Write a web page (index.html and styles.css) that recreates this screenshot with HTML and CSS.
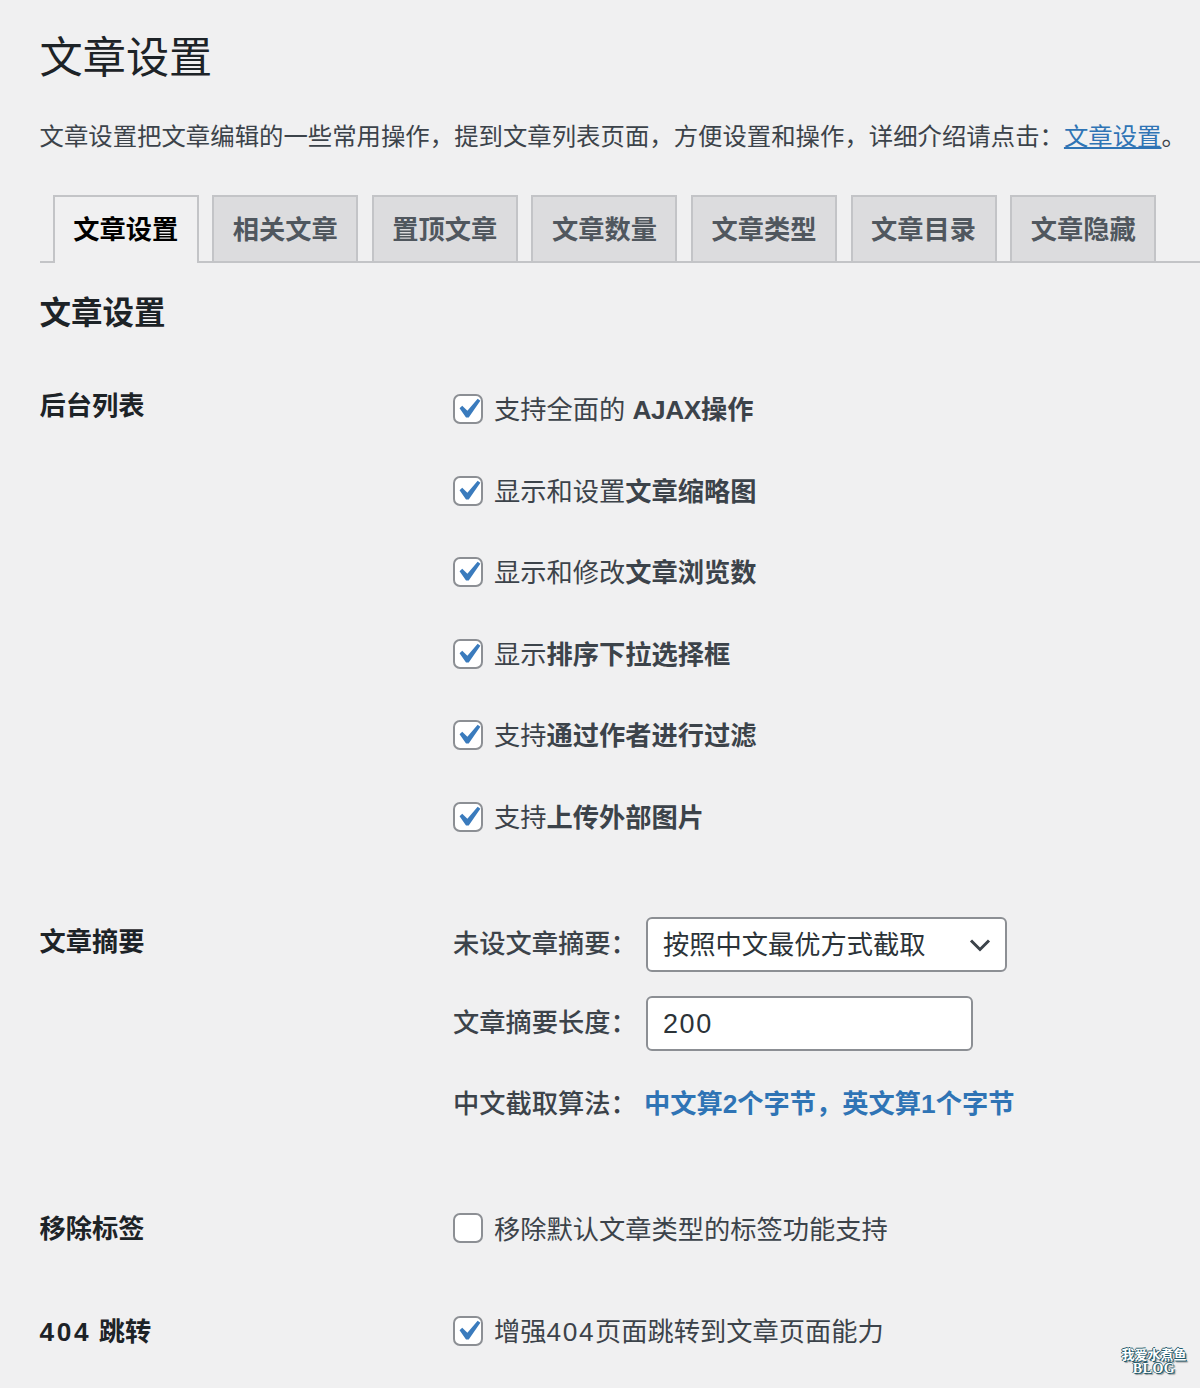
FILE: index.html
```html
<!DOCTYPE html>
<html lang="zh-CN">
<head>
  <meta charset="UTF-8">
  <title>文章设置</title>
  <link rel="stylesheet" href="styles.css">
</head>
<body>
  <div class="wrap">
    <h1>文章设置</h1>
    <p class="intro">文章设置把文章编辑的一些常用操作，提到文章列表页面，方便设置和操作，详细介绍请点击：<a href="#">文章设置</a>。</p>

    <nav class="tabs">
      <a class="tab active" href="#">文章设置</a>
      <a class="tab" href="#">相关文章</a>
      <a class="tab" href="#">置顶文章</a>
      <a class="tab" href="#">文章数量</a>
      <a class="tab" href="#">文章类型</a>
      <a class="tab" href="#">文章目录</a>
      <a class="tab" href="#">文章隐藏</a>
    </nav>

    <h2>文章设置</h2>

    <div class="form-row list-row">
      <div class="row-title">后台列表</div>
      <div class="check-list">
        <label class="check"><span class="box"><svg viewBox="0 0 20 20"><path d="M14.83 4.89l1.34.94-5.81 8.38H9.02L5.78 9.67l1.34-1.25 2.57 2.4z"/></svg></span><span class="check-text">支持全面的 <b><span class="latin">AJAX</span>操作</b></span></label>
        <label class="check"><span class="box"><svg viewBox="0 0 20 20"><path d="M14.83 4.89l1.34.94-5.81 8.38H9.02L5.78 9.67l1.34-1.25 2.57 2.4z"/></svg></span><span class="check-text">显示和设置<b>文章缩略图</b></span></label>
        <label class="check"><span class="box"><svg viewBox="0 0 20 20"><path d="M14.83 4.89l1.34.94-5.81 8.38H9.02L5.78 9.67l1.34-1.25 2.57 2.4z"/></svg></span><span class="check-text">显示和修改<b>文章浏览数</b></span></label>
        <label class="check"><span class="box"><svg viewBox="0 0 20 20"><path d="M14.83 4.89l1.34.94-5.81 8.38H9.02L5.78 9.67l1.34-1.25 2.57 2.4z"/></svg></span><span class="check-text">显示<b>排序下拉选择框</b></span></label>
        <label class="check"><span class="box"><svg viewBox="0 0 20 20"><path d="M14.83 4.89l1.34.94-5.81 8.38H9.02L5.78 9.67l1.34-1.25 2.57 2.4z"/></svg></span><span class="check-text">支持<b>通过作者进行过滤</b></span></label>
        <label class="check"><span class="box"><svg viewBox="0 0 20 20"><path d="M14.83 4.89l1.34.94-5.81 8.38H9.02L5.78 9.67l1.34-1.25 2.57 2.4z"/></svg></span><span class="check-text">支持<b>上传外部图片</b></span></label>
      </div>
    </div>

    <div class="form-row excerpt-row">
      <div class="row-title">文章摘要</div>
      <div class="fields">
        <div class="field">
          <span class="field-label">未设文章摘要：</span>
          <div class="select">按照中文最优方式截取<svg viewBox="0 0 20 20"><path d="M4 7l6 6 6-6"/></svg></div>
        </div>
        <div class="field">
          <span class="field-label">文章摘要长度：</span>
          <div class="input"><span class="num">200</span></div>
        </div>
        <div class="field algo">
          <span class="field-label">中文截取算法：</span>
          <span class="algo-value">中文算2个字节，英文算1个字节</span>
        </div>
      </div>
    </div>

    <div class="form-row tag-row">
      <div class="row-title">移除标签</div>
      <label class="check"><span class="box"></span><span class="check-text">移除默认文章类型的标签功能支持</span></label>
    </div>

    <div class="form-row redirect-row">
      <div class="row-title"><span class="num">404</span> 跳转</div>
      <label class="check"><span class="box"><svg viewBox="0 0 20 20"><path d="M14.83 4.89l1.34.94-5.81 8.38H9.02L5.78 9.67l1.34-1.25 2.57 2.4z"/></svg></span><span class="check-text">增强<span class="num">404</span>页面跳转到文章页面能力</span></label>
    </div>
  </div>

  <div class="watermark">我爱水煮鱼<span>BLOG</span></div>
</body>
</html>
```

FILE: styles.css
```css
html, body {
  margin: 0;
  height: 1388px;
  overflow: hidden;
}
body {
  position: relative;
  background: #f0f0f1;
  color: #3c434a;
  font-family: "Liberation Sans", "Noto Sans CJK SC", sans-serif;
  font-size: 26.25px;
}
.wrap {
  padding: 31px 0 0 39.5px;
}
h1 {
  margin: 0;
  height: 54px;
  line-height: 54px;
  font-size: 43.2px;
  font-weight: 400;
  color: #1d2327;
}
.intro {
  margin: 32px 0 0;
  height: 40px;
  line-height: 40px;
  font-size: 24.4px;
  white-space: nowrap;
}
.intro a {
  color: #2f74b5;
}
.num {
  letter-spacing: 1.6px;
}
.latin {
  letter-spacing: -0.4px;
}
.tabs {
  display: flex;
  gap: 13.6px;
  margin-top: 38px;
  padding-left: 13.15px;
  height: 66px;
  border-bottom: 2px solid #c3c4c7;
}
.tab {
  box-sizing: border-box;
  width: 146px;
  height: 66px;
  line-height: 67px;
  text-align: center;
  font-weight: 700;
  color: #50575e;
  text-decoration: none;
  background: #dcdcde;
  border: 2px solid #c3c4c7;
  border-bottom: 0;
}
.tab.active {
  height: 68px;
  color: #000;
  background: #f0f0f1;
}
h2 {
  margin: 30px 0 0;
  height: 40px;
  line-height: 40px;
  font-size: 31.5px;
  font-weight: 700;
  color: #1d2327;
}
.form-row {
  display: grid;
  grid-template-columns: 413.5px 1fr;
}
.row-title {
  height: 36px;
  line-height: 36px;
  font-weight: 700;
  color: #1d2327;
}
.row-title .num {
  letter-spacing: 2.7px;
}
.list-row {
  margin-top: 55px;
}
.check-list {
  display: flex;
  flex-direction: column;
  gap: 45.5px;
  padding-top: 3px;
}
.check {
  display: flex;
  align-items: center;
  gap: 11px;
  height: 36px;
  line-height: 36px;
}
.check-text {
  margin-top: 2px;
}
.check b {
  font-weight: 700;
}
.box {
  box-sizing: border-box;
  display: block;
  width: 30px;
  height: 30px;
  background: #fff;
  border: 2px solid #8c8f94;
  border-radius: 7px;
}
.box svg {
  display: block;
  width: 40px;
  height: 40px;
  margin: -7px;
  fill: #3a7bbd;
}
.excerpt-row {
  margin-top: 82px;
}
.excerpt-row .row-title {
  margin-top: 7px;
}
.fields {
  display: flex;
  flex-direction: column;
  gap: 24px;
}
.field {
  display: flex;
  align-items: center;
}
.field-label {
  width: 193px;
  flex: none;
  line-height: 36px;
  font-weight: 500;
}
.select, .input {
  box-sizing: border-box;
  height: 55px;
  line-height: 53px;
  padding-left: 15px;
  color: #2c3338;
  background: #fff;
  border: 2px solid #8c8f94;
  border-radius: 6px;
}
.select {
  display: flex;
  justify-content: space-between;
  align-items: center;
  width: 361px;
  padding-top: 2px;
  padding-right: 10px;
}
.select svg {
  width: 30px;
  height: 30px;
  fill: none;
  stroke: #3c434a;
  stroke-width: 2;
}
.input {
  width: 327px;
  font-size: 27px;
}
.algo {
  margin-top: 9px;
  height: 36px;
}
.algo .field-label {
  margin-top: 4px;
}
.algo-value {
  margin-left: -2px;
  font-weight: 700;
  color: #2f74b5;
}
.tag-row {
  margin-top: 90px;
}
.tag-row .check-text {
  margin-top: 4px;
}
.tag-row .row-title, .redirect-row .row-title {
  margin-top: 1px;
}
.redirect-row {
  margin-top: 66px;
}
.watermark {
  position: absolute;
  right: 12px;
  bottom: 12px;
  width: 68px;
  text-align: center;
  font-size: 13px;
  line-height: 14px;
  font-weight: 700;
  color: #fff;
  text-shadow: 1px 1px 0 #1f5a6b, -1px 0 0 #1f5a6b, 0 -1px 0 #1f5a6b, 2px 2px 1px #999;
}
.watermark span {
  display: block;
  font-family: "Liberation Serif", serif;
  font-size: 14px;
  letter-spacing: 0.5px;
}
```
